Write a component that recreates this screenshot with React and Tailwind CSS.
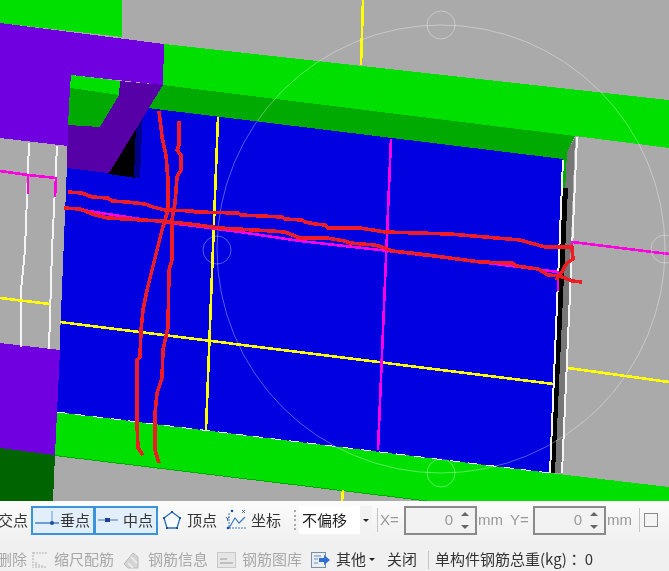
import React from "react";

const cjk = { fontFamily: '"Noto Sans CJK SC", "Liberation Sans", sans-serif' };
const latin = { fontFamily: '"Liberation Sans", sans-serif' };

const polys = [
  // top slabs
  ["#00e000", "0,0 122,0 122,37 0,23"],
  ["#00e000", "164,44 669,100 669,148 575,136 163,85"],
  // main blue face
  ["#0000e0", "143,105 563,155 550,473 57,412 67,165 134,173"],
  ["#00aa00", "163,85 575,136 567,152 568,188 563,188 563,159 148,108"],
  ["#000000", "140,122 136,178 108,174"],
  ["#00008a", "143,111 140,178 134,177 136,125"],
  // bottom slab
  ["#00e000", "57,412 550,473 669,487 669,530 55,455"],
  ["#00aa00", "55,455 669,530 669,531 55,456"],
  // column
  ["#7000e0", "0,23 164,44 163,85 71,75 68,146 0,138"],
  ["#5800a8", "120,81 163,85 109,173 67,168 68,125 100,127"],
  ["#00e000", "71,75 120,81 119,95 70,88"],
  ["#00aa00", "70,88 119,95 100,127 68,125"],
  ["#7000e0", "0,343 60,350 55,455 0,448"],
  ["#006400", "0,448 55,455 53,501 0,501"],
  // side strip
  ["#777777", "575,137 567,152 551,473 562,473"],
  ["#000000", "562,188 568,188 555,473 551,473"],
];

const whiteLines = [
  "29,143 25,250 21,290 21,347",
  "57,146 52,250 49,349",
  "577,137 562,473",
  "563,160 550,473",
];

const magenta = [
  "0,171 28,175 56,178 55,197",
  "28,175 28,194",
  "70,208 120,216 160,222 195,226 240,232 300,241 380,250 480,262 558,272 558,291",
  "572,250 572,242 669,254",
  "391,139 378,450",
];

const yellow = [
  "218,117 206,430",
  "60,322 553,384",
  "0,298 50,304",
  "568,368 669,382",
  "363,0 361,65",
  "343,490 342,501",
];

const red = [
  "68,192 82,193 92,197 108,198 112,201 127,202 145,204 153,207 165,210 193,211 195,212 238,213 241,215 282,217 285,219 302,220 305,222 315,224 325,225 328,228 360,228 385,232 450,234 520,240 545,247 572,247 573,259 567,263 560,275 556,280",
  "64,208 80,209 95,215 108,218 160,221 170,222 190,224 220,228 272,231 285,232 295,236 300,238 327,238 345,241 350,243 375,245 385,248 392,251 420,254 480,262 512,263 517,266 538,269 548,275 560,276 572,281 582,282",
  "159,111 161,127 162,137 166,155 168,180 168,210 165,220 162,230 157,250 152,270 147,290 143,310 141,330 140,357 137,360 137,423 138,448 143,455",
  "179,121 179,145 177,150 181,155 181,170 177,177 175,203 172,220 172,260 169,270 168,327 163,350 162,378 157,393 155,413 155,450 159,463",
];

function Scene() {
  return (
    <svg width="669" height="501" viewBox="0 0 669 501" className="block shrink-0 bg-[#aaaaaa]">
      <g shapeRendering="crispEdges">
        {polys.map(([fill, points], i) => (
          <polygon key={i} points={points} fill={fill} />
        ))}
        {whiteLines.map((p, i) => (
          <polyline key={i} points={p} fill="none" stroke="#f4f4f4" strokeWidth="2" />
        ))}
        <line x1="57" y1="412" x2="550" y2="473" stroke="#e8e8ff" strokeWidth="1" strokeDasharray="10 8" />
        {yellow.map((p, i) => (
          <polyline key={i} points={p} fill="none" stroke="#ffff00" strokeWidth="2.6" />
        ))}
        {magenta.map((p, i) => (
          <polyline key={i} points={p} fill="none" stroke="#ff00e0" strokeWidth="2.6" />
        ))}
      </g>
      <g fill="none" stroke="#ffffff" strokeOpacity="0.35" strokeWidth="1">
        <circle cx="441" cy="249" r="224" />
        <circle cx="441" cy="25" r="14" />
        <circle cx="441" cy="473" r="14" />
        <circle cx="217" cy="250" r="14" />
        <circle cx="665" cy="249" r="14" />
      </g>
      <g shapeRendering="crispEdges">
        {red.map((p, i) => (
          <polyline key={i} points={p} fill="none" stroke="#f01c24" strokeWidth="3.6" strokeLinejoin="round" />
        ))}
      </g>
    </svg>
  );
}

function SnapButton({ label, children }) {
  return (
    <div className="flex h-[29px] w-[64px] shrink-0 items-center justify-between border-2 border-[#3a94dc] bg-[#e2eef9] pl-[1px] pr-[3px] -mr-[1px]">
      {children}
      <span>{label}</span>
    </div>
  );
}

function Spinner({ value }) {
  return (
    <div className="flex h-[29px] w-[73px] shrink-0 items-center justify-end border-2 border-[#8a8a8a] bg-[#f2f2f2] pr-[6px] text-[#999999]" style={latin}>
      <span className="mr-[8px] text-[15px]">{value}</span>
      <div className="flex h-full flex-col items-center justify-center gap-[9px]">
        <div className="h-0 w-0 border-x-[4px] border-b-[4px] border-x-transparent border-b-[#666666]" />
        <div className="h-0 w-0 border-x-[4px] border-t-[4px] border-x-transparent border-t-[#666666]" />
      </div>
    </div>
  );
}

function Caret() {
  return <div className="h-0 w-0 shrink-0 border-x-[3px] border-t-[3px] border-x-transparent border-t-[#222222]" />;
}

function Toolbar() {
  return (
    <div className="flex h-[70px] w-[669px] flex-col overflow-hidden text-[15px] text-[#333333] blur-[0.4px]" style={cjk}>
      <div className="flex h-[44px] shrink-0 items-center bg-gradient-to-b from-[#fbfbfb] to-[#efefef] pb-[6px]">
        <span className="-ml-[2px] w-[33px] shrink-0 whitespace-nowrap">交点</span>
        <SnapButton label="垂点">
          <svg width="26" height="20" viewBox="0 0 26 20">
            <path d="M1 13H25" stroke="#3b7cc4" strokeWidth="1.4" />
            <path d="M18 1V13" stroke="#7fa8d6" strokeWidth="1.2" />
            <circle cx="18" cy="13" r="2" fill="#1d4f9a" />
          </svg>
        </SnapButton>
        <SnapButton label="中点">
          <svg width="22" height="20" viewBox="0 0 22 20">
            <path d="M1 10H21" stroke="#6d9bd0" strokeWidth="1.4" />
            <rect x="8" y="8" width="5" height="4" fill="#1d3f9a" />
          </svg>
        </SnapButton>
        <svg width="20" height="20" viewBox="0 0 20 20" className="ml-[5px] shrink-0">
          <path d="M10 2L18 8L15 18H5L2 8Z" fill="#f7fbff" stroke="#2b6cb0" strokeWidth="1.3" />
          <g fill="#1d4f9a">
            <rect x="9" y="1" width="2" height="2" />
            <rect x="1" y="7" width="2" height="2" />
            <rect x="17" y="7" width="2" height="2" />
            <rect x="4" y="17" width="2" height="2" />
            <rect x="14" y="17" width="2" height="2" />
          </g>
        </svg>
        <span className="ml-[5px] w-[32px] shrink-0 whitespace-nowrap">顶点</span>
        <svg width="22" height="22" viewBox="0 0 22 22" className="ml-[6px] shrink-0">
          <path d="M4 4V19H21" fill="none" stroke="#3b7cc4" strokeWidth="1" strokeDasharray="2 1" />
          <path d="M4 19L10 9L14 14L20 8" fill="none" stroke="#3b7cc4" strokeWidth="1.2" />
          <g fill="#1d4f9a">
            <circle cx="7" cy="2" r="1.3" />
            <circle cx="3" cy="19" r="1.3" />
            <path d="M17 1l3 3m0-3l-3 3" stroke="#1d4f9a" strokeWidth="0.8" />
            <path d="M1 8l1.5 2 1.5-2m-1.5 2v2" stroke="#1d4f9a" strokeWidth="0.8" fill="none" />
          </g>
        </svg>
        <span className="ml-[4px] w-[32px] shrink-0 whitespace-nowrap">坐标</span>
        <div className="ml-[11px] flex h-[24px] w-[3px] shrink-0 flex-col justify-between py-[2px]">
          {[0, 1, 2, 3, 4].map((i) => (
            <div key={i} className="h-[2px] w-[2px] bg-[#aaaaaa]" />
          ))}
        </div>
        <div className="ml-[2px] flex h-[28px] w-[73px] shrink-0 items-center bg-white pl-[3px] text-[#222222]">
          <span className="w-[58px] whitespace-nowrap">不偏移</span>
          <div className="flex h-full w-[12px] items-center justify-center bg-[#f2f2f2]">
            <Caret />
          </div>
        </div>
        <div className="ml-[5px] h-[24px] w-[1px] shrink-0 bg-[#c4c4c4]" />
        <span className="ml-[2px] w-[24px] shrink-0 text-[#999999]" style={latin}>X=</span>
        <Spinner value="0" />
        <span className="ml-[1px] w-[32px] shrink-0 text-[#999999]" style={latin}>mm</span>
        <span className="w-[23px] shrink-0 text-[#999999]" style={latin}>Y=</span>
        <Spinner value="0" />
        <span className="ml-[1px] w-[32px] shrink-0 text-[#999999]" style={latin}>mm</span>
        <div className="h-[24px] w-[1px] shrink-0 bg-[#c4c4c4]" />
        <div className="ml-[4px] h-[14px] w-[14px] shrink-0 border border-[#8a8a8a] bg-[#f5f5f5]" />
      </div>
      <div className="flex h-[26px] shrink-0 items-center bg-[#f0f0f0] pt-[3px]">
        <span className="-ml-[3px] w-[35px] shrink-0 whitespace-nowrap text-[#a8a8a8]">删除</span>
        <svg width="16" height="18" viewBox="0 0 16 18" className="shrink-0">
          <path d="M1 1V17M1 2H15" stroke="#b0b0b0" strokeWidth="1" strokeDasharray="2 1" fill="none" />
          <path d="M4 17V11M7 17V13M10 17V14M13 17V15" stroke="#c4c4c4" strokeWidth="1.5" />
        </svg>
        <span className="ml-[6px] w-[60px] shrink-0 whitespace-nowrap text-[#a8a8a8]">缩尺配筋</span>
        <svg width="20" height="18" viewBox="0 0 20 18" className="ml-[9px] shrink-0">
          <path d="M1 13L10 2L15 6V17H5Z" fill="#d4d4d4" stroke="#bbbbbb" />
          <path d="M8 6L14 12M5 12L10 17" stroke="#eeeeee" strokeWidth="1.5" />
        </svg>
        <span className="ml-[5px] w-[60px] shrink-0 whitespace-nowrap text-[#a8a8a8]">钢筋信息</span>
        <svg width="19" height="16" viewBox="0 0 19 16" className="ml-[9px] shrink-0">
          <rect x="0.5" y="0.5" width="18" height="15" fill="#e6e6e6" stroke="#c8c8c8" />
          <path d="M3 7H10M3 11H16" stroke="#b4b4b4" strokeWidth="1.5" />
        </svg>
        <span className="ml-[6px] w-[60px] shrink-0 whitespace-nowrap text-[#a8a8a8]">钢筋图库</span>
        <svg width="19" height="16" viewBox="0 0 19 16" className="ml-[9px] shrink-0">
          <rect x="0.5" y="0.5" width="14" height="15" fill="#e8eef5" stroke="#7a8ea6" />
          <path d="M3 4H10M3 7H7M3 11H7" stroke="#7a8ea6" />
          <path d="M8 6H13V3L19 8L13 13V10H8Z" fill="#2f6fd0" />
        </svg>
        <span className="ml-[6px] w-[33px] shrink-0 whitespace-nowrap">其他</span>
        <Caret />
        <span className="ml-[12px] w-[32px] shrink-0 whitespace-nowrap">关闭</span>
        <div className="ml-[9px] h-[18px] w-[1px] shrink-0 bg-[#c4c4c4]" />
        <span className="ml-[6px] whitespace-nowrap">
          单构件钢筋总重(kg)<span style={{ fontFamily: '"Noto Sans CJK TC", sans-serif' }}>：</span><span className="ml-[3px]">0</span>
        </span>
      </div>
    </div>
  );
}

export default function App() {
  return (
    <div className="flex h-[571px] w-[669px] flex-col overflow-hidden bg-[#f0f0f0]">
      <Scene />
      <Toolbar />
    </div>
  );
}
